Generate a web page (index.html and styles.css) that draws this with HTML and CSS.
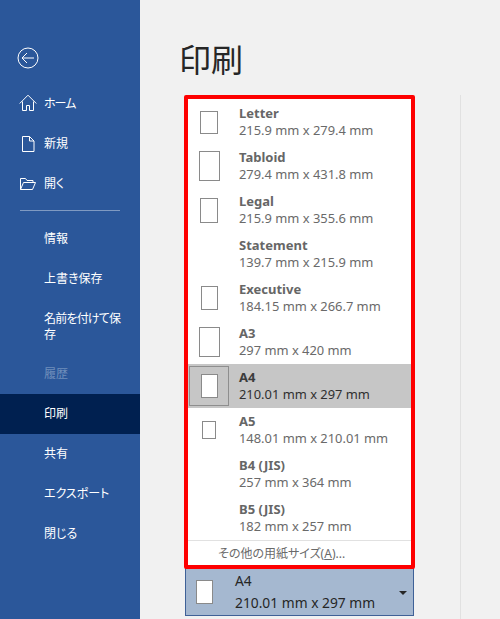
FILE: index.html
```html
<!DOCTYPE html>
<html lang="ja">
<head>
<meta charset="utf-8">
<title>印刷</title>
<link rel="stylesheet" href="styles.css">
</head>
<body>
<div class="app">
  <nav class="sidebar">
    <div class="back">
      <svg width="22" height="22" viewBox="0 0 22 22" fill="none" stroke="#fff" stroke-width="1"><circle cx="11" cy="11" r="10"/><path d="M5 11h12M10 6l-5 5 5 5"/></svg>
    </div>
    <a class="nav icon"><svg width="18" height="18" viewBox="0 0 18 18" fill="none" stroke="#fff" stroke-width="1"><path d="M.7 8.500 9 .2l8.300 8.300M3.500 6.500v9h4v-5h3v5h4v-9"/></svg><span class="tight">ホーム</span></a>
    <a class="nav icon"><svg width="18" height="18" viewBox="0 0 18 18" fill="none" stroke="#fff" stroke-width="1"><path d="M3.500 1.500h7l4.500 4.500v10.500h-11.500zM10.500 1.500v4.500h4.500"/></svg><span>新規</span></a>
    <a class="nav icon"><svg width="18" height="18" viewBox="0 0 18 18" fill="none" stroke="#fff" stroke-width="1"><path d="M1.500 14.500v-11h5l1.500 2h6v2M1.500 14.500h12l3-7h-12z"/></svg><span>開く</span></a>
    <hr class="rule">
    <a class="nav">情報</a>
    <a class="nav">上書き保存</a>
    <a class="nav tall">名前を付けて保存</a>
    <a class="nav off">履歴</a>
    <a class="nav on">印刷</a>
    <a class="nav">共有</a>
    <a class="nav">エクスポート</a>
    <a class="nav">閉じる</a>
  </nav>
  <main class="main">
    <h1 class="title">印刷</h1>
    <div class="stage">
      <div class="picker">
        <div class="paper cur"></div>
        <div class="cur-text"><div>A4</div><div>210.01 mm x 297 mm</div></div>
        <div class="caret"></div>
      </div>
      <div class="menu">
        <div class="row"><div class="cell"><div class="paper p-letter"></div></div><div><div class="nm">Letter</div><div class="sz">215.9 mm x 279.4 mm</div></div></div>
        <div class="row"><div class="cell"><div class="paper p-large"></div></div><div><div class="nm">Tabloid</div><div class="sz">279.4 mm x 431.8 mm</div></div></div>
        <div class="row"><div class="cell"><div class="paper p-legal"></div></div><div><div class="nm">Legal</div><div class="sz">215.9 mm x 355.6 mm</div></div></div>
        <div class="row"><div class="cell"></div><div><div class="nm">Statement</div><div class="sz">139.7 mm x 215.9 mm</div></div></div>
        <div class="row"><div class="cell"><div class="paper p-a4"></div></div><div><div class="nm">Executive</div><div class="sz">184.15 mm x 266.7 mm</div></div></div>
        <div class="row"><div class="cell"><div class="paper p-large"></div></div><div><div class="nm">A3</div><div class="sz">297 mm x 420 mm</div></div></div>
        <div class="row sel"><div class="cell"><div class="paper p-a4"></div></div><div><div class="nm">A4</div><div class="sz">210.01 mm x 297 mm</div></div></div>
        <div class="row"><div class="cell"><div class="paper p-a5"></div></div><div><div class="nm">A5</div><div class="sz">148.01 mm x 210.01 mm</div></div></div>
        <div class="row"><div class="cell"></div><div><div class="nm">B4 (JIS)</div><div class="sz">257 mm x 364 mm</div></div></div>
        <div class="row"><div class="cell"></div><div><div class="nm">B5 (JIS)</div><div class="sz">182 mm x 257 mm</div></div></div>
        <div class="more">その他の用紙サイズ(<u>A</u>)...</div>
      </div>
    </div>
  </main>
</div>
</body>
</html>
```
FILE: styles.css
```css
* { box-sizing: border-box; }
html, body { margin: 0; height: 100%; overflow: hidden; }
body {
  font-family: "Noto Sans", "Noto Sans CJK JP", sans-serif;
  font-feature-settings: "palt";
  background: #f1f1f1;
}
.app { display: flex; height: 619px; }
.sidebar {
  width: 140px;
  flex: none;
  background: #2b579a;
  color: #fff;
  padding-top: 47px;
  font-size: 12px;
}
.back { height: 23px; margin-left: 17px; margin-bottom: 14px; }
.back svg { display: block; }
.nav {
  display: flex;
  align-items: center;
  height: 40px;
  padding-left: 44px;
  padding-right: 12px;
  line-height: 16px;
}
.nav.icon { padding-left: 19px; gap: 7px; }
.nav.icon svg { flex: none; }
.tight { letter-spacing: -1px; }
.nav.tall { height: 55px; letter-spacing: -0.8px; padding-right: 16px; }
.nav.off { color: #6f8ebb; }
.nav.on { background: #002050; }
.rule {
  height: 1px;
  border: 0;
  background: #7f9ac2;
  margin: 6px 20px 8px 20px;
}
.main { flex: 1; position: relative; padding-left: 40px; }
.main::after {
  content: "";
  position: absolute;
  left: 320px;
  top: 95px;
  bottom: 0;
  width: 1px;
  background: #e1e1e1;
}
.title {
  margin: 0 0 0 -1px;
  padding-top: 40px;
  height: 95px;
  font-size: 32px;
  line-height: 40px;
  font-weight: 400;
  color: #262626;
}
.stage { position: relative; width: 232px; height: 524px; padding-top: 473px; }
.picker {
  display: flex;
  align-items: center;
  width: 229px;
  height: 48px;
  margin-left: 5px;
  background: #a5b8d0;
  border: 1px solid #3f6197;
  padding-left: 10px;
  font-size: 13.800px;
  color: #262626;
  position: relative;
}
.cur-text { margin-left: 22px; line-height: 22px; margin-top: -1px; }
.caret {
  position: absolute;
  right: 6px;
  top: 22px;
  border: 4px solid transparent;
  border-top: 4px solid #262626;
  border-bottom: 0;
}
.paper { background: #fff; border: 1px solid #8a8a8a; }
.cur { width: 17px; height: 24px; }
.menu {
  position: absolute;
  left: 4px;
  top: 0;
  width: 231px;
  height: 474px;
  background: #fff;
  border: 4px solid #fe0000;
  border-radius: 2px;
  display: flex;
  flex-direction: column;
  padding-top: 1px;
}
.row { display: flex; align-items: center; height: 44px; flex: none; }
.cell {
  width: 42px;
  height: 40px;
  margin: 0 9px 0 0;
  display: flex;
  align-items: center;
  justify-content: center;
  border: 1px solid transparent;
  flex: none;
}
.nm { font-size: 13px; line-height: 16px; font-weight: 700; color: #666; margin-top: -2px; }
.sz { font-size: 12.900px; line-height: 16px; color: #6a6a6a; margin-top: 1px; }
.p-letter { width: 18px; height: 23px; }
.p-large { width: 21px; height: 30px; }
.p-legal { width: 18px; height: 25px; }
.p-a4 { width: 17px; height: 24px; }
.p-a5 { width: 14px; height: 18px; }
.sel { background: #c6c6c6; }
.sel .cell { border-color: #8e8e8e; width: 40px; margin: 0 10px 0 1px; }
.sel .nm { color: #3c3c3c; }
.sel .sz { color: #303030; }
.more {
  border-top: 1px solid #e1e1e1;
  font-size: 12px;
  line-height: 26px;
  color: #6a6a6a;
  padding-left: 30px;
}
```
